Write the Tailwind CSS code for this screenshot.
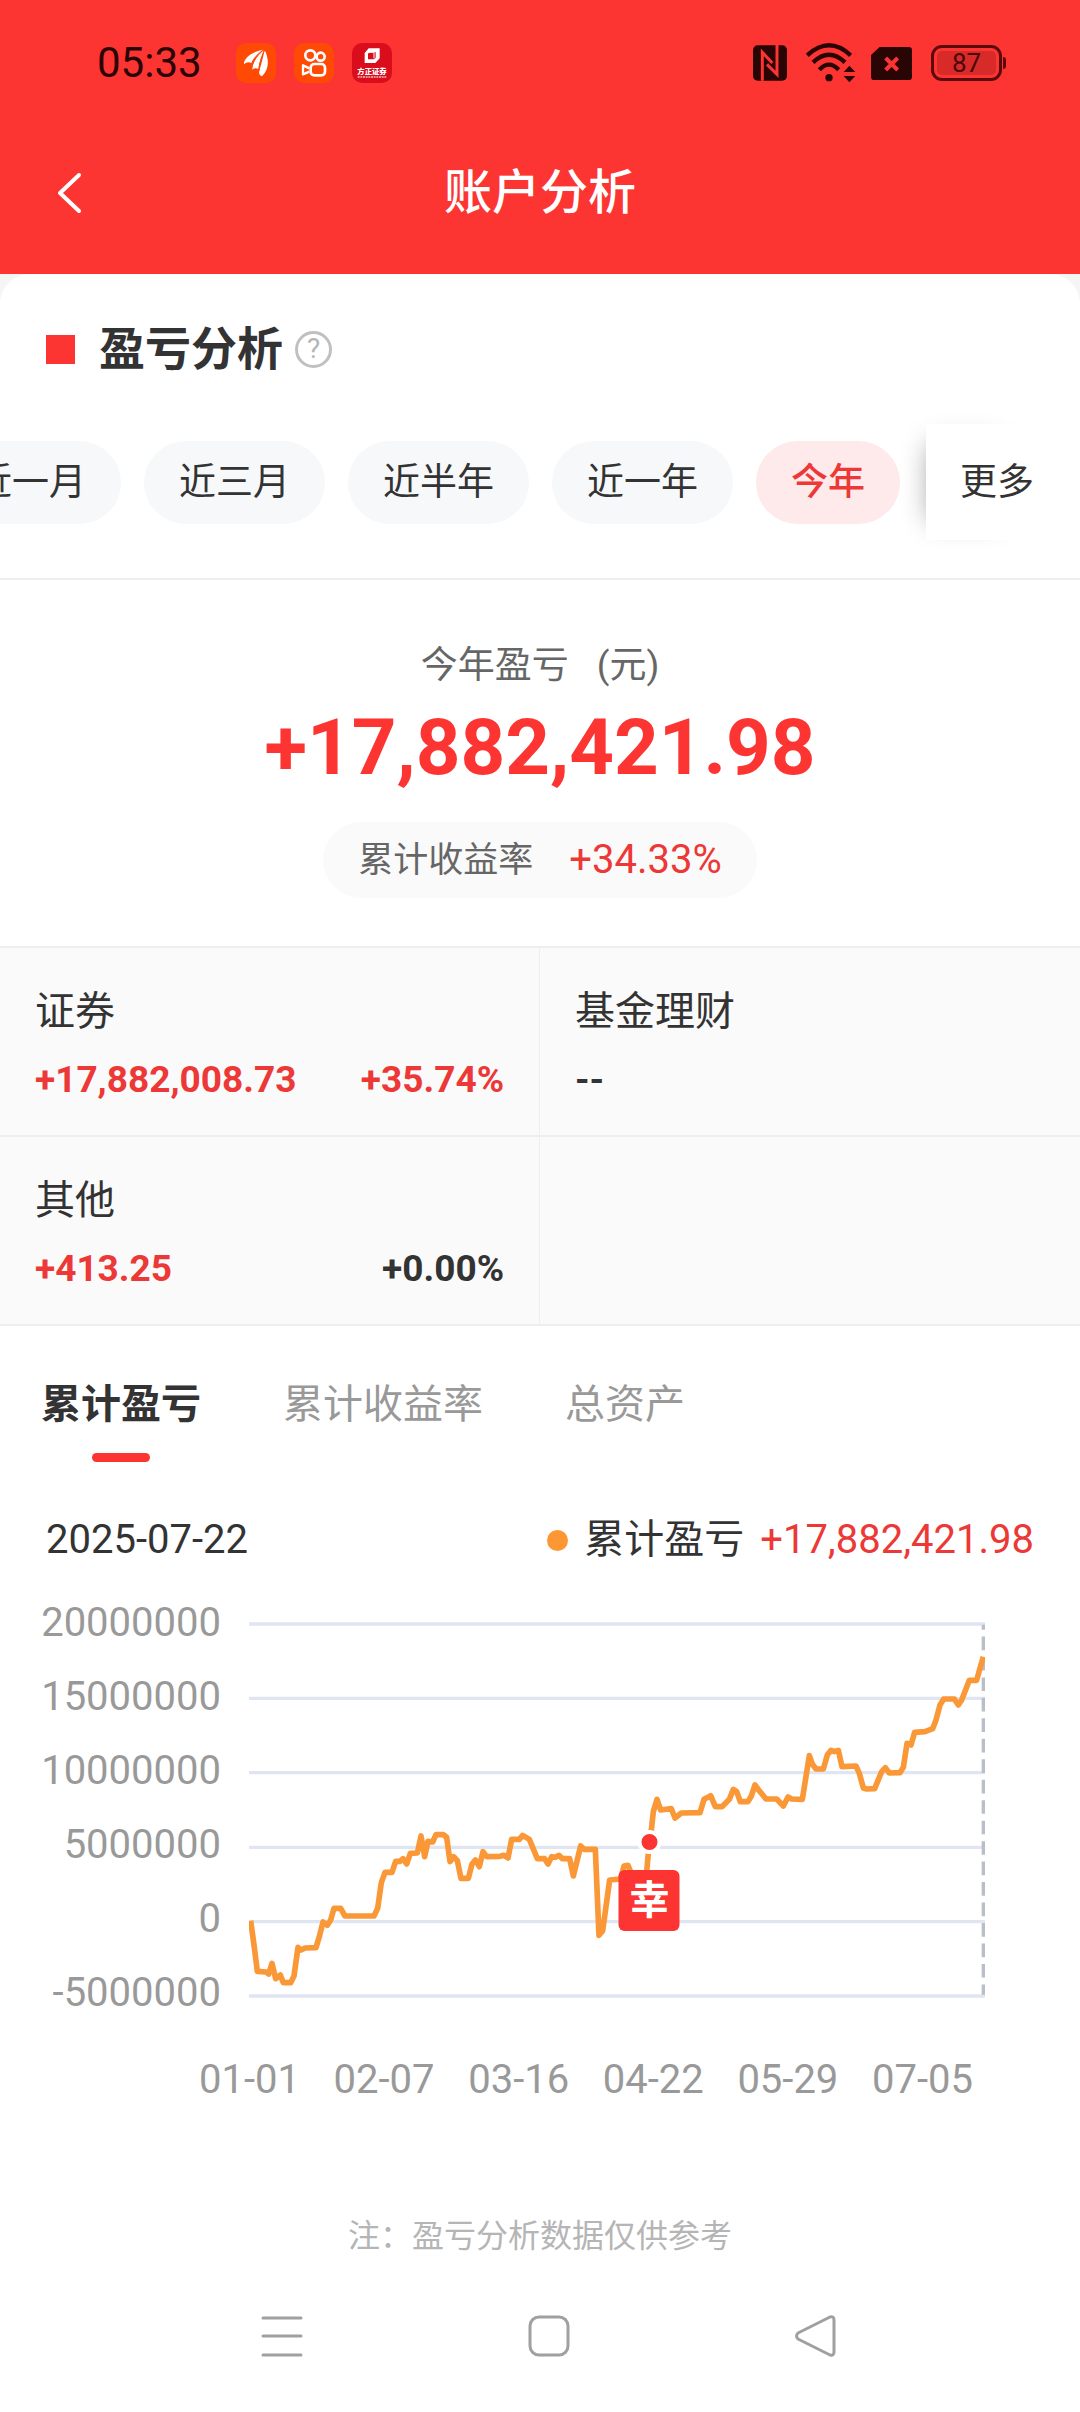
<!DOCTYPE html>
<html lang="zh-CN">
<head>
<meta charset="utf-8">
<meta name="viewport" content="width=device-width, initial-scale=1">
<title>账户分析</title>
<script src="https://cdn.jsdelivr.net/npm/@tailwindcss/browser@4"></script>
</head>
<body class="min-h-screen bg-[#f5f5f5] font-['Roboto','Noto_Sans_CJK_SC',sans-serif] text-[#333]">

<header class="bg-[#fc3432] pb-[14px]">
  <!-- status bar -->
  <div class="flex h-[126px] items-center justify-between pr-[74px] pl-[97px] text-[#2a0505]">
    <div class="flex items-center gap-[18px]">
      <time class="mr-4 text-[42px] leading-none">05:33</time>
      <svg class="size-10" viewBox="0 0 120 120" aria-hidden="true">
        <rect width="120" height="120" rx="30" fill="#ff4a05"/>
        <path d="M24 64C22 48 44 28 80 20C66 32 52 44 46 60C38 56 30 58 24 64Z" fill="#fff"/>
        <path d="M48 80C50 56 64 36 84 20C77 40 69 58 67 78C60 74 54 76 48 80Z" fill="#fff"/>
        <path d="M78 100C68 94 68 88 71 80C77 60 81 42 86 22C98 46 102 76 78 100Z" fill="#fff"/>
        <path d="M84 20C68 32 50 52 47 78M86 20C76 42 69 62 69 84" fill="none" stroke="#ff4a05" stroke-width="3"/>
      </svg>
      <svg class="size-10" viewBox="0 0 120 120" aria-hidden="true">
        <rect width="120" height="120" rx="30" fill="#ff4a05"/>
        <g fill="none" stroke="#fff" stroke-width="8">
          <circle cx="49" cy="37" r="15"/><circle cx="80" cy="41" r="12"/>
          <rect x="50" y="63" width="43" height="34" rx="11"/>
          <path d="M46 76L27 67V94L46 86" stroke-linejoin="round" stroke-width="7"/>
        </g>
      </svg>
      <svg class="size-10" viewBox="0 0 120 120" aria-hidden="true">
        <rect width="120" height="120" rx="30" fill="#d90d1c"/>
        <path fill-rule="evenodd" fill="#fff" d="M50 16H83V46L70 60H38V30ZM52 28L48 32V49H66L71 44V28Z"/>
        <path d="M48 28H66V46" fill="none" stroke="#fff" stroke-width="3"/>
        <text x="60" y="92" text-anchor="middle" font-size="22" font-weight="900" fill="#fff">方正证券</text>
        <path d="M17 102H103" stroke="#fff" stroke-width="4" stroke-dasharray="6 2" opacity=".7"/>
      </svg>
    </div>
    <div class="flex items-center">
      <svg class="h-[36px] w-[34px]" viewBox="0 0 102 108" role="img" aria-label="NFC">
        <rect y="1" width="102" height="106" rx="14" fill="currentColor"/>
        <path d="M28 107V22L58 54M72 0V88L42 58" fill="none" stroke="#fc3432" stroke-width="9"/>
      </svg>
      <svg class="ml-[19px] h-10 w-[50px]" viewBox="0 0 150 120" role="img" aria-label="Wi-Fi">
        <g fill="none" stroke="currentColor" stroke-width="13">
          <path d="M4 37Q69 -23 134 37"/><path d="M21 58Q69 12 117 58"/><path d="M40 80Q69 50 98 80"/>
        </g>
        <circle cx="69" cy="104" r="11" fill="currentColor"/>
        <path d="M113 87L130 68L148 87ZM113 99L130 118L148 99Z" fill="currentColor"/>
      </svg>
      <svg class="ml-[15px] h-[33px] w-[41px]" viewBox="0 0 123 99" role="img" aria-label="无 SIM 卡">
        <path d="M26 0H113Q123 0 123 10V89Q123 99 113 99H10Q0 99 0 89V24Z" fill="currentColor"/>
        <path d="M44 33L80 69M80 33L44 69" stroke="#fc3432" stroke-width="12"/>
      </svg>
      <div class="ml-[19px] flex items-center">
        <div class="flex h-[36px] w-[71px] items-center justify-center rounded-[11px] border-[3px] border-[#5a0a0a] bg-[#d92a2a] bg-clip-content p-[3px] text-[26px] leading-none text-[#4a0808]">87</div>
        <div class="ml-px h-3 w-[3px] rounded-r bg-[#5a0a0a]"></div>
      </div>
    </div>
  </div>
  <!-- title bar -->
  <div class="grid h-[134px] grid-cols-[1fr_auto_1fr] items-center px-[46px]">
    <button type="button" aria-label="返回" class="flex h-12 w-12 items-center justify-center">
      <svg class="h-[44px] w-[28px]" viewBox="0 0 28 44" fill="none" stroke="#fff" stroke-width="4" stroke-linecap="round" stroke-linejoin="round"><path d="M23 4L4 22L23 40"/></svg>
    </button>
    <h1 class="text-[48px] leading-none font-medium text-white">账户分析</h1>
  </div>
</header>

<main class="rounded-t-[30px] bg-white">
  <div class="flex h-[150px] items-center px-[46px]">
    <span class="size-[29px] bg-[#fc3432]"></span>
    <h2 class="ml-6 text-[46px] leading-none font-bold">盈亏分析</h2>
    <button type="button" aria-label="说明" class="ml-3 flex size-[37px] items-center justify-center rounded-full border-[3px] border-[#c0c0c0] text-[28px] leading-none text-[#b5b5b5]">?</button>
  </div>

  <!-- period filter -->
  <div class="border-b-2 border-[#eee] pr-[46px] pb-[38px]">
    <div class="flex h-[116px]">
      <div class="flex min-w-0 flex-1 items-center gap-[23px] overflow-hidden text-[37px] leading-none">
        <button type="button" class="-ml-[60px] h-[83px] shrink-0 rounded-full bg-[#f7f8fa] px-[35px]">近一月</button>
        <button type="button" class="h-[83px] shrink-0 rounded-full bg-[#f7f8fa] px-[35px]">近三月</button>
        <button type="button" class="h-[83px] shrink-0 rounded-full bg-[#f7f8fa] px-[35px]">近半年</button>
        <button type="button" class="h-[83px] shrink-0 rounded-full bg-[#f7f8fa] px-[35px]">近一年</button>
        <button type="button" aria-pressed="true" class="h-[83px] shrink-0 rounded-full bg-[#feeaea] px-[35px] font-medium text-[#ec3836]">今年</button>
      </div>
      <button type="button" class="relative shrink-0 bg-white pl-[34px] text-[37px] leading-none shadow-[-16px_0_28px_-20px_rgba(0,0,0,0.4)]">更多</button>
    </div>
  </div>

  <!-- summary -->
  <section class="flex flex-col items-center pt-[58px] pb-12">
    <p class="flex gap-7 text-[37px] leading-[56px] text-[#666]"><span>今年盈亏</span><span>(元)</span></p>
    <p class="text-[78px] leading-[108px] font-bold text-[#fc3432]">+17,882,421.98</p>
    <p class="mt-5 flex h-[76px] items-center gap-9 rounded-full bg-[#fafafa] px-[35px] text-[35px] leading-none text-[#666]">
      <span>累计收益率</span><span class="text-[40px] text-[#ec3836]">+34.33%</span>
    </p>
  </section>

  <!-- breakdown by account type -->
  <section class="grid grid-cols-2 border-t-2 border-[#eee] bg-[#fafafa] text-[40px] leading-[52px]">
    <div class="border-r border-b-2 border-[#eee] px-[35px] pt-[38px] pb-[29px]">
      <h3>证券</h3>
      <p class="mt-4 flex justify-between text-[37px] font-bold text-[#ec3836]"><span>+17,882,008.73</span><span>+35.74%</span></p>
    </div>
    <div class="border-b-2 border-[#eee] px-[35px] pt-[38px] pb-[29px]">
      <h3>基金理财</h3>
      <p class="mt-4 text-[37px] font-bold">--</p>
    </div>
    <div class="border-r border-b-2 border-[#eee] px-[35px] pt-[38px] pb-[29px]">
      <h3>其他</h3>
      <p class="mt-4 flex justify-between text-[37px] font-bold"><span class="text-[#ec3836]">+413.25</span><span>+0.00%</span></p>
    </div>
    <div class="border-b-2 border-[#eee]"></div>
  </section>

  <!-- chart tabs -->
  <div role="tablist" class="flex items-start gap-[82px] px-[41px] pt-[51px] text-[40px] leading-[56px] text-[#999]">
    <button type="button" role="tab" aria-selected="true" class="flex flex-col items-center gap-5 font-bold text-[#333]">累计盈亏<span class="h-[9px] w-[58px] rounded-full bg-[#fc3432]"></span></button>
    <button type="button" role="tab" aria-selected="false">累计收益率</button>
    <button type="button" role="tab" aria-selected="false">总资产</button>
  </div>

  <div class="mt-[50px] flex items-center justify-between px-[46px] text-[40px] leading-[56px]">
    <time>2025-07-22</time>
    <p class="flex items-center"><span class="mr-4 size-[21px] rounded-full bg-[#fd9733]"></span>累计盈亏<span class="ml-4 text-[#ec3836]">+17,882,421.98</span></p>
  </div>

  <!-- cumulative profit chart -->
  <figure class="mt-[54px] text-[40px] text-[#999]">
    <div class="flex h-[376px] pr-[95px] pl-[46px]">
      <div class="-mt-9 flex w-[175px] shrink-0 flex-col items-end leading-[74px]">
        <span>20000000</span><span>15000000</span><span>10000000</span><span>5000000</span><span>0</span><span>-5000000</span>
      </div>
      <div class="relative ml-7 flex-1">
        <svg class="block h-full w-full" viewBox="687 96 2208 1128" preserveAspectRatio="none" fill="none" role="img" aria-label="累计盈亏走势">
          <path stroke="#e0e6f1" stroke-width="10" d="M687 102H2895M687 325H2895M687 548H2895M687 772H2895M687 995H2895M687 1218H2895"/>
          <path stroke="#b9bec9" stroke-width="10" stroke-dasharray="41 20.4" stroke-dashoffset="26" d="M2890 104V1214"/>
          <polyline stroke="#fa9838" stroke-width="17" stroke-linejoin="round" points="692,992 702,1065 712,1144 738,1146 746,1152 756,1120 767,1166 781,1155 790,1178 812,1178 822,1158 834,1072 843,1080 855,1074 888,1073 898,1040 909,996 922,1006 932,990 942,955 962,955 975,978 1062,978 1073,955 1084,878 1095,847 1116,847 1127,814 1140,814 1149,806 1160,822 1171,790 1192,789 1203,738 1214,800 1224,754 1238,756 1248,734 1270,734 1280,742 1290,815 1301,800 1312,812 1323,865 1345,865 1356,822 1366,810 1378,830 1389,785 1400,800 1440,799 1452,796 1464,804 1475,748 1498,748 1508,736 1528,748 1552,806 1574,806 1584,822 1595,800 1606,802 1617,796 1627,806 1649,806 1660,858 1682,768 1693,778 1726,778 1737,1036 1748,1022 1769,870 1802,867 1812,828 1824,826 1834,850 1845,880 1876,880 1880,845 1888,757 1894,720 1900,665 1911,628 1922,660 1954,656 1965,684 1984,669 2040,668 2052,628 2072,617 2086,650 2106,650 2128,628 2140,598 2150,605 2161,635 2184,635 2194,618 2205,585 2216,600 2238,627 2270,627 2290,648 2304,621 2315,627 2347,628 2368,497 2377,522 2388,537 2410,537 2422,495 2433,481 2443,485 2455,481 2466,530 2508,528 2518,550 2530,594 2540,597 2564,596 2585,545 2596,533 2608,549 2640,548 2650,532 2661,460 2673,465 2684,427 2715,425 2738,416 2748,390 2760,345 2771,327 2803,327 2815,345 2825,330 2848,271 2870,271 2880,235 2890,200"/>
        </svg>
        <!-- highlighted trade marker -->
        <div class="absolute top-[208px] left-[54.4%] flex -translate-x-1/2 flex-col items-center gap-4">
          <span class="size-6 rounded-full border-4 border-white bg-[#fc3432]"></span>
          <span class="flex size-[61px] items-center justify-center rounded-md bg-[#fc3432] text-[40px] leading-none font-bold text-white">幸</span>
        </div>
      </div>
    </div>
    <div class="mt-[58px] flex justify-between pr-[107px] pl-[199px] leading-[48px]">
      <span>01-01</span><span>02-07</span><span>03-16</span><span>04-22</span><span>05-29</span><span>07-05</span>
    </div>
  </figure>

  <p class="mt-[108px] text-center text-[32px] leading-[48px] text-[#b5b5b5]">注：盈亏分析数据仅供参考</p>

  <!-- system navigation -->
  <nav class="grid h-[152px] grid-cols-3 place-items-center pr-[131px] pl-[148px] text-[#a0a0a0]">
    <button type="button" aria-label="最近任务"><svg class="size-[42px]" viewBox="0 0 42 42" stroke="currentColor" stroke-width="3" stroke-linecap="round"><path d="M2 3H40M2 21H40M2 40H40"/></svg></button>
    <button type="button" aria-label="主屏幕"><svg class="size-[42px]" viewBox="0 0 42 42" fill="none" stroke="currentColor" stroke-width="3"><rect x="2" y="2" width="38" height="38" rx="9"/></svg></button>
    <button type="button" aria-label="返回上一页"><svg class="size-[42px]" viewBox="0 0 42 42" fill="none" stroke="currentColor" stroke-width="3" stroke-linejoin="round"><path d="M3 18Q0 21 3 24L35 40Q39 41 39 37V5Q39 1 35 2Z"/></svg></button>
  </nav>
</main>
</body>
</html>
